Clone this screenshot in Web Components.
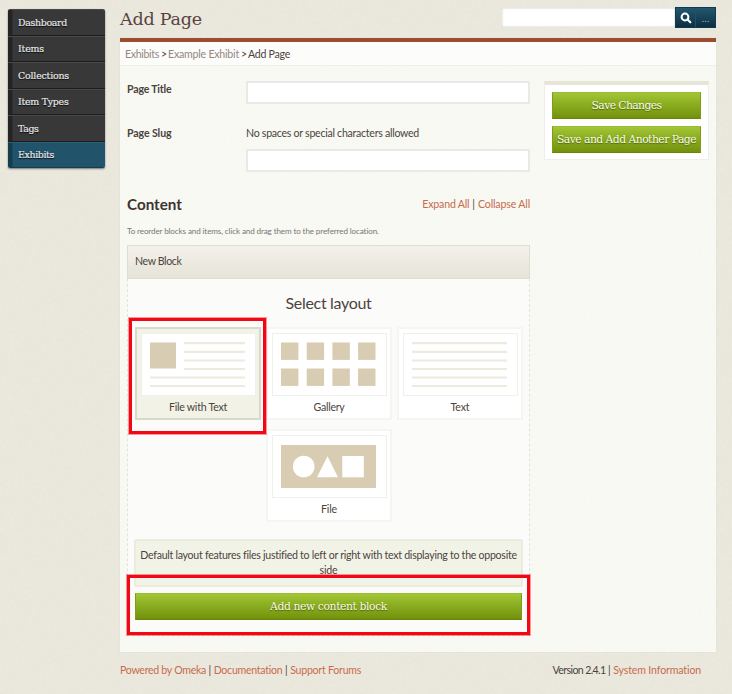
<!DOCTYPE html>
<html lang="en">
<head>
<meta charset="utf-8">
<title>Add Page</title>
<style>
html,body{margin:0;padding:0}
body{width:732px;height:694px;overflow:hidden;background:#e9e7da;font-family:Lato,"Open Sans",sans-serif;color:#4c4340;--slab:"DejaVu Serif",serif;--grain:url("data:image/svg+xml,%3Csvg xmlns='http://www.w3.org/2000/svg' width='180' height='180'%3E%3Cfilter id='n'%3E%3CfeTurbulence type='fractalNoise' baseFrequency='.28' numOctaves='2' stitchTiles='stitch'/%3E%3CfeColorMatrix values='0 0 0 0 .45 0 0 0 0 .42 0 0 0 0 .3 .1 0 0 0 -.03'/%3E%3C/filter%3E%3Crect width='180' height='180' filter='url(%23n)'/%3E%3C/svg%3E")}
</style>
</head>
<body>
<omeka-app></omeka-app>
<script>
function define(name, css, html, setup) {
  const template = document.createElement('template');
  template.innerHTML = `<style>*{box-sizing:border-box}${css}</style>${html}`;
  customElements.define(name, class extends HTMLElement {
    connectedCallback() {
      if (this.shadowRoot) return;
      this.attachShadow({ mode: 'open' }).append(template.content.cloneNode(true));
      if (setup) setup.call(this, this.shadowRoot);
    }
  });
}

// Single-line label tracked to an exact width.
define('ui-label', `:host{display:inline-block;white-space:nowrap;flex:none}`, `<slot></slot>`, function () {
  const target = +this.getAttribute('w');
  if (!target) return;
  const count = this.textContent.length;
  const natural = this.getBoundingClientRect().width;
  this.style.letterSpacing = (target - natural) / count + 'px';
});

define('nav-item', `
:host{display:flex;align-items:center;flex:1;padding-left:10px;background:linear-gradient(90deg,#242424 4px,#383838 5px);border-top:1px solid #484848;border-bottom:1px solid #1d1d1d;color:#e9e9e9;font:9.4px var(--slab);-webkit-text-stroke:.2px #e9e9e9;text-shadow:0 1px 1px #000}
:host([current]){background:linear-gradient(90deg,#153d50 4px,#21536b 5px);border-top-color:#285f79;border-bottom-color:#153d50}
`, `<slot></slot>`);

define('side-nav', `
:host{display:flex;flex-direction:column;width:97px;height:159px;border-radius:2px;overflow:hidden;box-shadow:0 1px 2px #777}
`, `
<nav-item><ui-label w="49">Dashboard</ui-label></nav-item>
<nav-item><ui-label w="26">Items</ui-label></nav-item>
<nav-item><ui-label w="51">Collections</ui-label></nav-item>
<nav-item><ui-label w="50.5">Item Types</ui-label></nav-item>
<nav-item><ui-label w="20.5">Tags</ui-label></nav-item>
<nav-item current><ui-label w="36">Exhibits</ui-label></nav-item>`);

define('search-box', `
:host{display:flex;align-items:center;width:214px;height:21px}
.field{flex:1;height:19px;background:#fff;box-shadow:inset 0 0 2px #bbb}
.buttons{display:flex;width:41px;height:21px;background:linear-gradient(#22576f,#0d2f42);border:1px solid #123b50}
.buttons>*{flex:1;display:flex;align-items:center;justify-content:center}
.more{border-left:1px solid #244f65;color:#9db1ba;font-size:10px}
`, `<div class="field"></div><div class="buttons"><span><svg width="12" height="12" viewBox="0 0 12 12"><circle cx="5" cy="5" r="3.4" fill="none" stroke="#fff" stroke-width="2"/><path d="M7.8 7.8 10.3 10.3" stroke="#fff" stroke-width="2.2" stroke-linecap="round"/></svg></span><span class="more">…</span></div>`);

define('green-button', `
:host{display:flex;align-items:center;justify-content:center;height:27px;padding-bottom:1px;background:linear-gradient(#a3c636,#8db023 40%,#72920c);border:1px solid #7d9d19;border-top-color:#9abb38;border-bottom-color:#688509;color:#fafbe8;font:10.8px var(--slab);text-shadow:0 1px 1px #4c610a}
`, `<slot></slot>`);

define('text-field', `
:host{display:block;height:23px;background:#fff;border:2px solid #e9e9e8}
`, ``);

const line = (x1, x2, y) => `<path d="M${x1} ${y}H${x2}" stroke="#edeae0" stroke-width="2.2"/>`;
const art = {
  mixed: `<rect x="8" y="8.5" width="26" height="26" fill="#d8cdb3"/>` +
    [9.2, 17.8, 26.5, 35].map(y => line(42, 103, y)).join('') + [43.5, 52].map(y => line(8, 103, y)).join(''),
  grid: [0, 1, 2, 3].map(i => [8.5, 34.5].map(y => `<rect x="${8 + i * 25.7}" y="${y}" width="17.4" height="17.4" fill="#d8cdb3"/>`).join('')).join(''),
  lines: [9.2, 17.8, 26.5, 35, 43.5, 52].map(y => line(8, 103, y)).join(''),
  shapes: `<rect x="8" y="9" width="95" height="43" fill="#d8cdb3"/><circle cx="30.7" cy="30.5" r="10.8" fill="#fff"/><path d="M44 41.3 54.5 20.2 65 41.3Z" fill="#fff"/><rect x="69.3" y="20" width="21.5" height="21.3" fill="#fff"/>`
};

define('layout-card', `
:host{display:flex;flex-direction:column;align-items:center;width:126px;height:93px;padding-top:4px;background:#fff;border:2px solid #f5f5f4;font-size:10.6px}
:host([selected]){background:#f2f3e6;border-color:#d8d9ca}
.thumb{width:115px;height:63px;background:#fff;border:1px solid #efefee}
svg{display:block;width:113px;height:61px}
.name{flex:1;display:flex;align-items:center;padding-bottom:1px}
`, `<div class="thumb"></div><div class="name"><slot></slot></div>`, function (root) {
  root.querySelector('.thumb').innerHTML = `<svg viewBox="0 0 113 61">${art[this.getAttribute('kind')]}</svg>`;
});

define('block-builder', `
:host{display:flex;flex-direction:column;width:403px;height:391px;margin-left:7px}
.head{height:34px;display:flex;align-items:center;padding:0 0 3px 7px;background:linear-gradient(#f3f1ea,#e6e4d8);border:1px solid #dfddce;font-size:10.6px}
.body{flex:1;background:#fbfbf9;border:1px dashed #e2e3da;border-top:0;display:flex;flex-direction:column;align-items:center;position:relative}
.title{height:48px;display:flex;align-items:center;font-size:16px;padding-bottom:1px}
.cards{display:grid;grid-template-columns:repeat(3,126px);column-gap:5px;row-gap:9px;margin-left:1px}
.mid{grid-column:2}
.desc{width:389px;height:48px;margin-top:17px;padding-top:7px;background:#f2f3e7;border:2px solid #ecebdd;border-radius:2px;text-align:center;font-size:10.6px;line-height:15px;display:flex;flex-direction:column;align-items:center}
green-button{width:387px;margin-top:6px}
.mark{position:absolute;border:3px solid #f30715;box-shadow:0 0 0 1px #f3071566}
.one{left:1px;top:39px;width:137px;height:116px}
.two{left:-1px;top:296px;width:403px;height:60px}
`, `
<div class="head"><ui-label w="46.5">New Block</ui-label></div>
<div class="body">
<div class="title"><ui-label w="86">Select layout</ui-label></div>
<div class="cards">
<layout-card kind="mixed" selected><ui-label w="58">File with Text</ui-label></layout-card>
<layout-card kind="grid"><ui-label w="31">Gallery</ui-label></layout-card>
<layout-card kind="lines"><ui-label w="19">Text</ui-label></layout-card>
<layout-card class="mid" kind="shapes"><ui-label w="16">File</ui-label></layout-card>
</div>
<div class="desc"><ui-label w="376">Default layout features files justified to left or right with text displaying to the opposite</ui-label><ui-label w="18">side</ui-label></div>
<green-button><ui-label w="117">Add new content block</ui-label></green-button>
<div class="mark one"></div><div class="mark two"></div>
</div>`);

define('omeka-app', `
:host{display:grid;grid-template-columns:97px 596px;column-gap:15px;width:732px;height:694px;padding:0 16px 0 8px;background:var(--grain) #ebe9de;font-size:10.6px}
side-nav{margin-top:9px}
.page{display:flex;flex-direction:column}
header{height:38px;display:flex;justify-content:space-between;padding-top:7px;border:0}
h1{margin:0;font:17.5px/23px var(--slab);color:#574342}
h1 ui-label{padding-top:1px}
main{height:614px;border-top:4px solid #9b4c31;background:#fafcf8cc;box-shadow:0 0 1px #ccc}
.crumbs{height:24px;display:flex;align-items:center;padding-left:5px;gap:2px;background:#fcfcfa;border-bottom:1px solid #eeeeeb}
.crumbs .link{color:#948782}
.cols{display:grid;grid-template-columns:410px 165px;column-gap:14px}
.row{display:grid;grid-template-columns:119px 284px;padding-left:7px}
.row>ui-label{justify-self:start}
.r1{margin-top:15px;height:44px}
.r2{height:60px}
h2{font-weight:bold}
.row>.key{font-weight:bold;line-height:16px}
.hint{height:24px;line-height:16px}
.content{display:flex;justify-content:space-between;align-items:center;height:30px;padding:0 0 3px 7px;margin-top:5px}
h2{font-size:15.2px;margin:0;color:#3e3331}
.links{display:flex;gap:3px}
.red{color:#c96a4c}
.reorder{height:25px;padding:2px 0 0 7px;font-size:8.1px;line-height:18px;color:#7b7672}
.save{height:79px;margin-top:15px;background:#fff;border:1px solid #eee;border-top:4px solid #e6e5d7;display:flex;flex-direction:column;gap:7px;padding:7px 7px 0}
footer{height:35px;display:flex;align-items:center;justify-content:space-between;margin-right:15px}
footer div{display:flex;gap:2.5px}
`, `
<side-nav></side-nav>
<div class="page">
<header><h1><ui-label w="82">Add Page</ui-label></h1><search-box></search-box></header>
<main>
<div class="crumbs"><ui-label class="link" w="34">Exhibits</ui-label><ui-label w="5">&gt;</ui-label><ui-label class="link" w="71">Example Exhibit</ui-label><ui-label w="5">&gt;</ui-label><ui-label w="42">Add Page</ui-label></div>
<div class="cols">
<section>
<div class="row r1"><ui-label class="key" w="44.5">Page Title</ui-label><text-field></text-field></div>
<div class="row r2"><ui-label class="key" w="44.5">Page Slug</ui-label><div><div class="hint"><ui-label w="173">No spaces or special characters allowed</ui-label></div><text-field></text-field></div></div>
<div class="content"><h2><ui-label w="55">Content</ui-label></h2><div class="links"><ui-label class="red" w="47">Expand All</ui-label><span>|</span><ui-label class="red" w="52">Collapse All</ui-label></div></div>
<div class="reorder"><ui-label w="252">To reorder blocks and items, click and drag them to the preferred location.</ui-label></div>
<block-builder></block-builder>
</section>
<aside><div class="save"><green-button><ui-label w="70">Save Changes</ui-label></green-button><green-button><ui-label w="139">Save and Add Another Page</ui-label></green-button></div></aside>
</div>
</main>
<footer><div><ui-label class="red" w="86">Powered by Omeka</ui-label><span>|</span><ui-label class="red" w="69">Documentation</ui-label><span>|</span><ui-label class="red" w="71">Support Forums</ui-label></div><div><ui-label w="53">Version 2.4.1</ui-label><span>|</span><ui-label class="red" w="88">System Information</ui-label></div></footer>
</div>`);
</script>
</body>
</html>
